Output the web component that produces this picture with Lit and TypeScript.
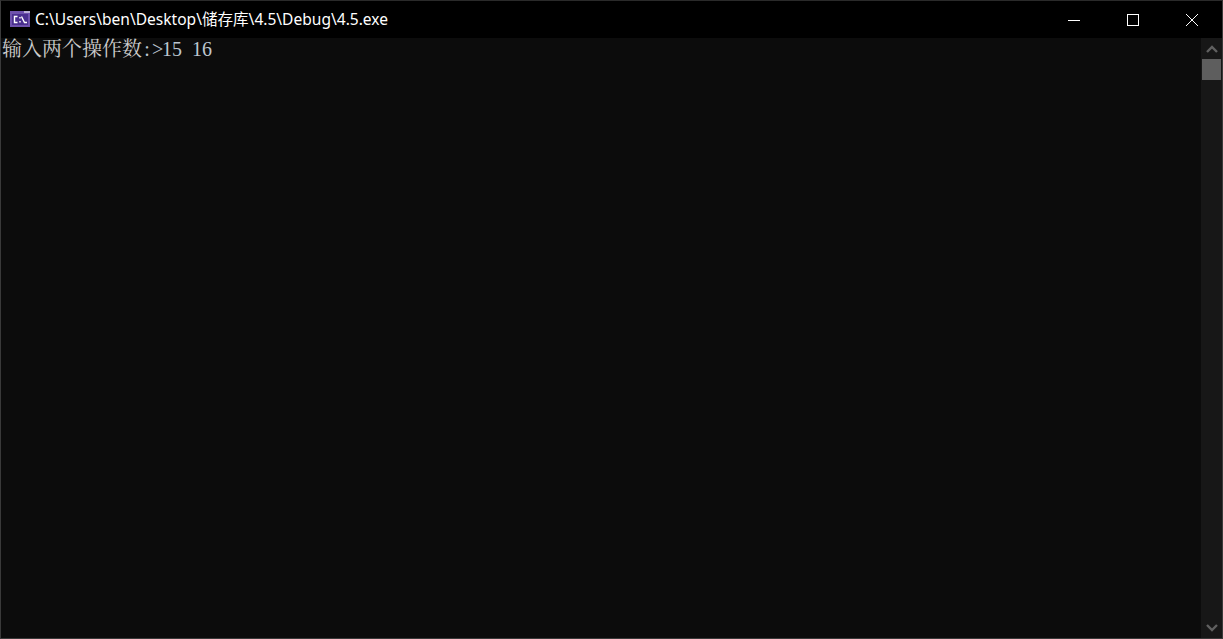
import { LitElement, html, css } from "lit";
import { customElement } from "lit/decorators.js";

@customElement("app-root")
export class AppRoot extends LitElement {
  static styles = css`
    :host { display: block; }
    .win {
      width: 1223px; height: 639px; box-sizing: border-box;
      display: flex; flex-direction: column;
      background: #0c0c0c; border: 1px solid #3a3a3a; border-top-color: #2a2a2a; overflow: hidden;
    }
    .title {
      height: 37px; flex: none; background: #000; display: flex; align-items: center;
      padding-right: 1px;
      color: #fff; font: 15.55px "Noto Sans", "Noto Sans CJK SC", sans-serif;
      white-space: nowrap;
    }
    .appicon { width: 20px; height: 16px; margin: -1px 5px 0 9px; flex: none; display: block; }
    .path { flex: 1; padding-bottom: 2px; }
    .btn { width: 59px; height: 37px; display: flex; align-items: center; justify-content: center; flex: none; }
    .btn svg { display: block; }
    .body { flex: 1; display: flex; min-height: 0; }
    .console {
      flex: 1; padding: 0 0 0 1px;
      color: #cccccc; white-space: pre;
      font: 20px/20px "Liberation Serif", serif;
    }
    .cjk { font: 20px/20px "Noto Serif CJK SC", "Noto Sans CJK SC", serif; }
    .cell { display: inline-block; width: 10px; text-align: center; color: #bcc6cf; }
    .sb { width: 21px; flex: none; background: #171717; display: flex; flex-direction: column; align-items: center; }
    .arrow { height: 21px; flex: none; display: flex; align-items: center; justify-content: center; }
    .track { flex: 1; width: 100%; display: flex; justify-content: center; }
    .thumb { width: 19px; height: 21px; background: #5e5e5e; }
  `;
  render() {
    const cells = ":>15 16".split("");
    return html`<div class="win">
      <div class="title">
        <svg class="appicon" viewBox="0 0 20 16">
          <rect width="20" height="16" fill="#6f52ad"/>
          <rect x="14" width="6" height="2" fill="#b9aed6"/>
          <rect x="2" y="3" width="16" height="11" fill="#4a2f8f"/>
          <path d="M7.5 5.5H4.5V11.5H7.5M10 6V7.5M10 10V11.5M11.5 5.5L14.5 11.5H17" stroke="#fff" stroke-width="1.4" fill="none"/>
        </svg>
        <span class="path">C:\\Users\\ben\\Desktop\\储存库\\4.5\\Debug\\4.5.exe</span>
        <div class="btn"><svg width="12" height="12"><path d="M0 6.5H12" stroke="#fff"/></svg></div>
        <div class="btn"><svg width="12" height="12"><rect x=".5" y=".5" width="11" height="11" fill="none" stroke="#fff"/></svg></div>
        <div class="btn"><svg width="12" height="12"><path d="M0 0L12 12M12 0L0 12" stroke="#fff"/></svg></div>
      </div>
      <div class="body">
        <div class="console"><span class="cjk">输入两个操作数</span>${cells.map((c) => html`<span class="cell">${c}</span>`)}</div>
        <div class="sb">
          <div class="arrow"><svg width="12" height="8"><path d="M1 7L6 2L11 7" stroke="#606060" stroke-width="2.4" fill="none"/></svg></div>
          <div class="track"><div class="thumb"></div></div>
          <div class="arrow"><svg width="12" height="8"><path d="M1 1L6 6L11 1" stroke="#606060" stroke-width="2.4" fill="none"/></svg></div>
        </div>
      </div>
    </div>`;
  }
}
